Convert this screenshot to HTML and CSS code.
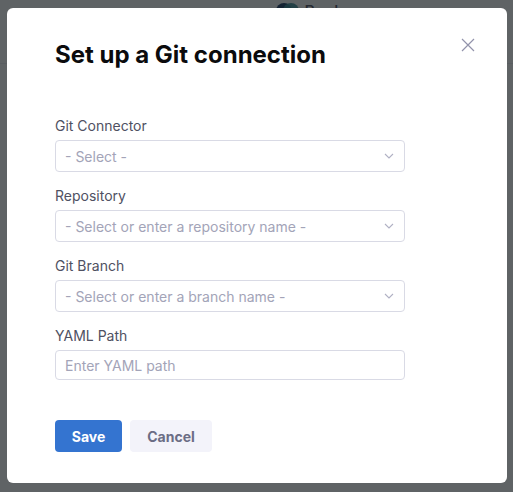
FILE: index.html
```html
<!DOCTYPE html>
<html>
<head>
<meta charset="utf-8">
<link rel="stylesheet" href="styles.css">
</head>
<body>
<header class="page-header">
  <div class="brand">
    <svg class="brand-logo" width="24" height="18" viewBox="0 0 24 18"><circle cx="8" cy="9" r="8" fill="#1d3b66"/><circle cx="15" cy="9" r="8" fill="#3a8a97" opacity="0.9"/></svg>
    <span class="brand-name">Boolean</span>
  </div>
</header>
<div class="overlay">
  <div class="modal">
    <button class="close" aria-label="Close">
      <svg width="14" height="14" viewBox="0 0 14 14"><path d="M1 1L13 13M13 1L1 13" stroke="#9293ab" stroke-width="1.2" fill="none"/></svg>
    </button>
    <h1 class="title">Set up a Git connection</h1>
    <form class="form">
      <div class="field">
        <label class="label">Git Connector</label>
        <div class="select"><span class="placeholder">- Select -</span><svg class="chev" width="10" height="6" viewBox="0 0 10 6"><path d="M1 1L5 5L9 1" stroke="#b0b1c4" stroke-width="1.1" fill="none"/></svg></div>
      </div>
      <div class="field">
        <label class="label">Repository</label>
        <div class="select"><span class="placeholder">- Select or enter a repository name -</span><svg class="chev" width="10" height="6" viewBox="0 0 10 6"><path d="M1 1L5 5L9 1" stroke="#b0b1c4" stroke-width="1.1" fill="none"/></svg></div>
      </div>
      <div class="field">
        <label class="label">Git Branch</label>
        <div class="select"><span class="placeholder">- Select or enter a branch name -</span><svg class="chev" width="10" height="6" viewBox="0 0 10 6"><path d="M1 1L5 5L9 1" stroke="#b0b1c4" stroke-width="1.1" fill="none"/></svg></div>
      </div>
      <div class="field">
        <label class="label">YAML Path</label>
        <div class="text-input"><span class="placeholder">Enter YAML path</span></div>
      </div>
      <div class="actions">
        <button type="button" class="btn btn-primary">Save</button>
        <button type="button" class="btn btn-secondary">Cancel</button>
      </div>
    </form>
  </div>
</div>
</body>
</html>
```
FILE: styles.css
```css
* { box-sizing: border-box; }
html, body { margin: 0; padding: 0; }
body {
  background: #ffffff;
  font-family: Inter, "Noto Sans", sans-serif;
  width: 513px;
  height: 492px;
  overflow: hidden;
}
.page-header {
  height: 64px;
  border-bottom: 1px solid #ececf2;
  display: flex;
  justify-content: center;
}
.brand {
  display: flex;
  align-items: center;
  gap: 4px;
  margin-left: 130px;
  height: 22px;
}
.brand-name {
  font-size: 16px;
  font-weight: 500;
  color: #4f5162;
}
.overlay {
  position: fixed;
  inset: 0;
  background: rgba(16, 22, 26, 0.67);
  display: flex;
  align-items: flex-start;
  justify-content: flex-start;
  padding: 8px 0 0 7px;
}
.modal {
  position: relative;
  width: 500px;
  height: 475px;
  background: #ffffff;
  border-radius: 6px;
  padding: 32px 48px 31px 48px;
}
.close {
  position: absolute;
  top: 30px;
  right: 32px;
  width: 14px;
  height: 14px;
  padding: 0;
  border: 0;
  background: none;
  display: flex;
}
.title {
  margin: 0;
  font-size: 24px;
  line-height: 30px;
  font-weight: 700;
  color: #0b0b0d;
}
.form {
  margin-top: 46px;
  width: 350px;
  display: flex;
  flex-direction: column;
  gap: 14px;
}
.field {
  display: flex;
  flex-direction: column;
  gap: 4px;
}
.label {
  font-size: 14px;
  line-height: 20px;
  color: #4f5162;
}
.select, .text-input {
  height: 32px;
  border: 1px solid #d9dae5;
  border-radius: 4px;
  display: flex;
  align-items: center;
  justify-content: space-between;
  padding: 0 10px 0 9px;
}
.text-input { height: 30px; }
.placeholder {
  font-size: 14px;
  color: #a3a4b8;
}
.chev { display: block; }
.actions {
  margin-top: 26px;
  display: flex;
  gap: 8px;
}
.btn {
  height: 32px;
  border: 0;
  border-radius: 4px;
  padding: 0 16px;
  font-family: Inter, "Noto Sans", sans-serif;
  font-size: 14px;
  font-weight: 700;
}
.btn-primary {
  background: #3474d0;
  color: #ffffff;
  width: 67px;
}
.btn-secondary {
  background: #f3f3fa;
  color: #6b6d85;
  width: 82px;
}
```
